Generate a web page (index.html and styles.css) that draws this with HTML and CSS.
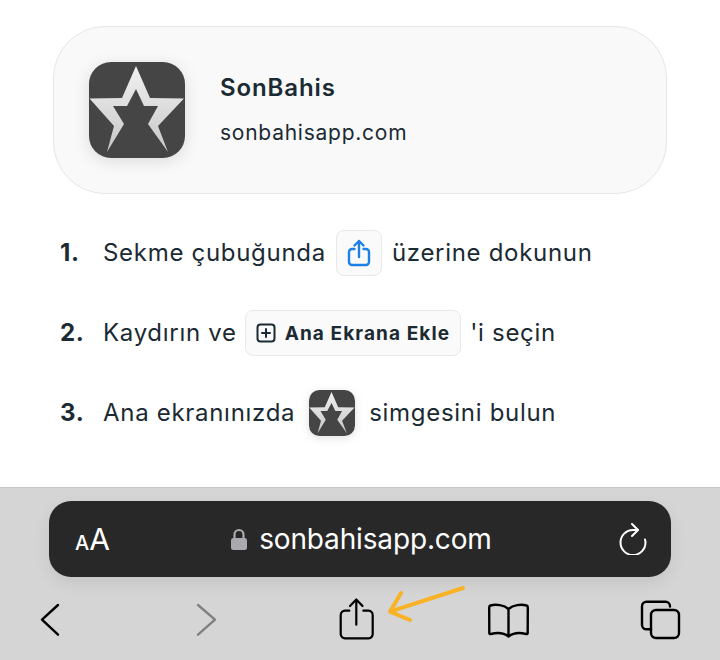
FILE: index.html
```html
<!DOCTYPE html>
<html lang="en">
<head>
  <meta charset="UTF-8">
  <title>SonBahis</title>
  <link rel="stylesheet" href="styles.css">
</head>
<body>
  <div class="screen">
    <main class="content">
      <section class="app-card">
        <svg class="logo logo-big" viewBox="0 0 96 96">
          <defs>
            <linearGradient id="starFill" x1="0" y1="0" x2="0" y2="1">
              <stop offset="0" stop-color="#f2f2f2"/>
              <stop offset="1" stop-color="#c6c6c6"/>
            </linearGradient>
          </defs>
          <rect width="96" height="96" rx="22" fill="#454545"/>
          <polygon fill="url(#starFill)" points="47,4 61,36 95,36.5 69,64 79,90 59,62 69,44 55,44 47,27 38,44 24,44 35,62 18,90 25,64 0.5,36.5 33,36"/>
        </svg>
        <div class="app-info">
          <div class="app-name">SonBahis</div>
          <div class="app-url">sonbahisapp.com</div>
        </div>
      </section>

      <ol class="steps">
        <li class="step">
          <span class="step-num">1.</span>
          <span>Sekme çubuğunda</span>
          <span class="chip chip-icon">
            <svg class="share-blue" viewBox="0 0 24 28" fill="none" stroke="#1c80e6" stroke-width="2.4" stroke-linecap="round" stroke-linejoin="round">
              <path d="M7.5 10H5a3 3 0 0 0-3 3v10a3 3 0 0 0 3 3h14a3 3 0 0 0 3-3V13a3 3 0 0 0-3-3h-2.5"/>
              <path d="M12 18V2M7.5 6.5 12 2l4.5 4.5"/>
            </svg>
          </span>
          <span>üzerine dokunun</span>
        </li>
        <li class="step">
          <span class="step-num">2.</span>
          <span>Kaydırın ve</span>
          <span class="chip chip-label">
            <svg class="plus-box" viewBox="0 0 20 20" fill="none" stroke="#1b2a33" stroke-width="2" stroke-linecap="round">
              <rect x="1.5" y="1.5" width="17" height="17" rx="3"/>
              <path d="M10 6v8M6 10h8"/>
            </svg>
            Ana Ekrana Ekle
          </span>
          <span class="after-chip">'i seçin</span>
        </li>
        <li class="step">
          <span class="step-num">3.</span>
          <span>Ana ekranınızda</span>
          <svg class="logo logo-small" viewBox="0 0 96 96">
            <rect width="96" height="96" rx="22" fill="#454545"/>
            <polygon fill="url(#starFill)" points="47,4 61,36 95,36.5 69,64 79,90 59,62 69,44 55,44 47,27 38,44 24,44 35,62 18,90 25,64 0.5,36.5 33,36"/>
          </svg>
          <span>simgesini bulun</span>
        </li>
      </ol>
    </main>

    <footer class="toolbar">
      <div class="address-bar">
        <span class="text-size"><small>A</small>A</span>
        <span class="address">
          <svg class="lock" viewBox="0 0 16 22">
            <path d="M3.5 11V6.500a4.500 4.500 0 0 1 9 0V11" fill="none" stroke="#a9a9ae" stroke-width="2.200"/>
            <rect y="10" width="16" height="12" rx="2.500" fill="#a9a9ae"/>
          </svg>
          sonbahisapp.com
        </span>
        <svg class="reload" viewBox="0 0 28 32" fill="none" stroke="#fff" stroke-width="2" stroke-linecap="round" stroke-linejoin="round">
          <path d="M19 7H14A12.500 12.500 0 1 0 26.500 19.500C26.500 18.500 26.400 17.500 26 16.500"/>
          <path d="M13 1l6 6-6 6"/>
        </svg>
      </div>
      <nav class="nav-icons">
        <svg class="nav-icon" viewBox="0 0 44 44" fill="none" stroke="#000" stroke-width="2.400" stroke-linecap="round" stroke-linejoin="round">
          <path d="M26 8 10 22.700 26 37.700"/>
        </svg>
        <svg class="nav-icon" viewBox="0 0 44 44" fill="none" stroke="#808080" stroke-width="2.400" stroke-linecap="round" stroke-linejoin="round">
          <path d="M14 8 31 22.700 14 37.700"/>
        </svg>
        <svg class="nav-icon" viewBox="0 0 44 44" fill="none" stroke="#000" stroke-width="2.200" stroke-linecap="round" stroke-linejoin="round">
          <path d="M13.300 13.700H9a4.500 4.500 0 0 0-4.300 4.500V37A4.500 4.500 0 0 0 9 41.300h23.500a4.500 4.500 0 0 0 4.200-4.300V18.200a4.500 4.500 0 0 0-4.200-4.500h-5.200"/>
          <path d="M20.300 27.700V2.500M14 9l6.300-6.500L26.500 9"/>
        </svg>
        <svg class="nav-icon" viewBox="0 0 44 44" fill="none" stroke="#000" stroke-width="2.400" stroke-linecap="round" stroke-linejoin="round">
          <path d="M20.500 12C16 8 8 7 2.500 8.500c-1 .3-1.300 1-1.300 2L1.300 36c0 1 .7 1.300 1.700 1 6-1.500 13-1 17.500 2.500C25 36 32 35.500 38 37c1 .3 1.700 0 1.700-1l.1-25.500c0-1-.3-1.700-1.300-2C33 7 25 8 20.500 12zM20.500 12v27"/>
        </svg>
        <svg class="nav-icon" viewBox="0 0 44 44" fill="none" stroke="#000" stroke-width="2.400" stroke-linecap="round" stroke-linejoin="round">
          <path d="M30 9.500V9a4.500 4.500 0 0 0-4.300-4.300H6.500A4.500 4.500 0 0 0 2 9v19a4.500 4.500 0 0 0 4.500 4.300H11"/>
          <rect x="11" y="13" width="28" height="28" rx="5"/>
        </svg>
      </nav>
      <!-- hand drawn arrow on top of the screenshot -->
      <svg class="pointer" viewBox="0 0 84 44" fill="none" stroke="#f9b225" stroke-width="4" stroke-linecap="round" stroke-linejoin="round">
        <path d="M79 5 6 28.700M17 10 6 28.700 26 37"/>
      </svg>
    </footer>
  </div>
</body>
</html>
```

FILE: styles.css
```css
* {
  box-sizing: border-box;
}

body {
  margin: 0;
  font-family: Inter, "Liberation Sans", sans-serif;
  background: #fff;
  color: #1b2a33;
}

.screen {
  width: 720px;
  height: 660px;
  display: flex;
  flex-direction: column;
  overflow: hidden;
}

.content {
  height: 487px;
  padding: 26px 53px 0;
}

.app-card {
  height: 168px;
  display: flex;
  align-items: center;
  gap: 35px;
  padding: 0 35px;
  background: #f9f9fa;
  border: 1px solid #e6e6e6;
  border-radius: 52px;
}

.logo {
  display: block;
  flex: none;
}

.logo-big {
  width: 96px;
  height: 96px;
  filter: drop-shadow(0 3px 8px rgba(0, 0, 0, 0.12));
}

.logo-small {
  width: 46px;
  height: 46px;
  margin: 0 4px;
  filter: drop-shadow(0 2px 4px rgba(0, 0, 0, 0.12));
}

.app-info {
  padding-bottom: 2px;
}

.app-name {
  font-size: 24px;
  font-weight: 600;
  letter-spacing: 0.9px;
  margin-bottom: 18px;
}

.app-url {
  font-size: 21px;
  letter-spacing: 0.75px;
}

.steps {
  list-style: none;
  margin: 36px 0 0;
  padding: 0 0 0 7px;
}

.step {
  height: 46px;
  margin-bottom: 34px;
  display: flex;
  align-items: center;
  gap: 10px;
  font-size: 24px;
  letter-spacing: 0.7px;
  white-space: nowrap;
}

.step > span {
  padding-bottom: 2px;
}

.step-num {
  width: 33px;
  font-weight: 700;
}

.step > .chip {
  display: flex;
  align-items: center;
  height: 46px;
  padding-bottom: 0;
  background: #fafafa;
  border: 1px solid #e8e8e8;
  border-radius: 8px;
}

.chip-icon {
  width: 46px;
  justify-content: center;
}

.step > .chip-label {
  gap: 9px;
  margin-left: -2px;
  padding: 0 10px;
  font-size: 19px;
  font-weight: 700;
  letter-spacing: 1.1px;
}

.after-chip {
  margin-left: -1px;
}

.share-blue {
  width: 24px;
  height: 28px;
}

.plus-box {
  width: 20px;
  height: 20px;
}

.toolbar {
  position: relative;
  height: 173px;
  background: #d5d5d5;
  border-top: 1px solid #c6c6c6;
  padding: 13px 49px 0;
}

.address-bar {
  height: 76px;
  display: flex;
  align-items: center;
  justify-content: space-between;
  padding: 0 24px 0 26px;
  background: #282828;
  border-radius: 22px;
  color: #fff;
  box-shadow: 0 6px 16px rgba(0, 0, 0, 0.08);
}

.text-size {
  font-size: 30px;
}

.text-size small {
  font-size: 20px;
  font-weight: 500;
}

.address {
  display: flex;
  align-items: center;
  gap: 12px;
  margin-right: 6px;
  font-size: 28px;
  letter-spacing: -0.15px;
}

.lock {
  width: 16px;
  height: 22px;
}

.reload {
  width: 28px;
  height: 32px;
}

.nav-icons {
  display: flex;
  gap: 108px;
  margin: 20px 0 0 -17px;
}

.nav-icon {
  width: 44px;
  height: 44px;
  flex: none;
}

.pointer {
  position: absolute;
  left: 384px;
  top: 95px;
  width: 84px;
  height: 44px;
}
```
